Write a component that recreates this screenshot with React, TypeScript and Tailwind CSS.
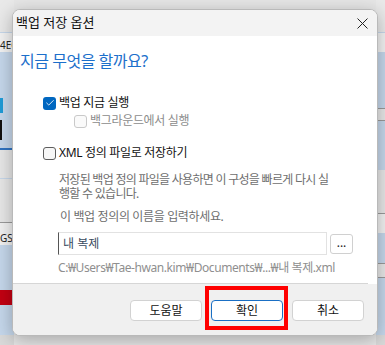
import { Check } from 'lucide-react'

const FONT = "font-['Noto_Sans','Noto_Sans_CJK_KR',sans-serif]"

type BoxProps = { checked?: boolean; disabled?: boolean }

const CheckBox = ({ checked, disabled }: BoxProps) => {
  if (checked) {
    return (
      <span className="w-[13px] h-[13px] rounded-[3px] bg-[#0067c0] flex items-center justify-center shrink-0">
        <Check size={10} strokeWidth={2} color="#ffffff" />
      </span>
    )
  }
  return (
    <span
      className={
        disabled
          ? 'w-[13px] h-[13px] rounded-[3px] border border-[#c9c9c9] bg-[#fafafa] shrink-0'
          : 'w-[13px] h-[13px] rounded-[3px] border border-[#5d5d5d] bg-[#f7f7f7] shrink-0'
      }
    />
  )
}

const DialogButton = ({ label, primary }: { label: string; primary?: boolean }) => (
  <button
    className={
      primary
        ? 'w-[72px] h-[21px] rounded-[4px] border border-[#1a6fc4] bg-white text-[12px] leading-none text-[#111] flex items-center justify-center'
        : 'w-[72px] h-[21px] rounded-[4px] border border-[#d2d2d2] bg-white text-[12px] leading-none text-[#111] flex items-center justify-center'
    }
  >
    {label}
  </button>
)

const App = () => {
  return (
    <div className={`relative w-[385px] h-[345px] overflow-hidden bg-[#e4e4e4] ${FONT}`}>
      {/* window behind the dialog */}
      <div className="flex h-full">
        <div className="w-[14px] flex flex-col">
          <div className="h-[32px] bg-[#e9e9e9]" />
          <div className="h-px bg-[#c6d7ea]" />
          <div className="h-[19px] bg-[#f2f2f2] text-[10px] leading-[19px] text-[#222] pt-[3px]">4EC</div>
          <div className="h-[96px] bg-[#c5d7eb] flex flex-col">
            <div className="h-[46px]" />
            <div className="h-[15px] w-[3px] bg-[#1f9bd7]" />
            <div className="h-[7px]" />
            <div className="h-[20px] w-[2px] bg-[#111]" />
          </div>
          <div className="h-[2px] bg-[#2f73c1]" />
          <div className="h-[28px] bg-[#e7e7e7]" />
          <div className="h-px bg-[#c6d7ea]" />
          <div className="h-[43px] bg-[#e7e7e7]" />
          <div className="h-px bg-[#9a9a9a]" />
          <div className="h-[22px] bg-[#f1f1f1] text-[10px] leading-[30px] text-[#222]">GST</div>
          <div className="h-[45px] bg-[#c5d7eb]" />
          <div className="h-[15px] bg-[#c30012]" />
          <div className="h-[30px] bg-[#c5d7eb]" />
          <div className="flex-1 bg-[#d9d9d9]" />
        </div>
        <div className="flex-1 bg-[#e6e6e6]" />
        <div className="w-[9px] flex flex-col">
          <div className="h-[32px] bg-[#e9e9e9]" />
          <div className="h-px bg-[#c6d7ea]" />
          <div className="h-[19px] bg-[#f2f2f2]" />
          <div className="h-[56px] bg-[#c5d7eb]" />
          <div className="h-px bg-[#9a9a9a]" />
          <div className="h-[11px] bg-[#e7e7e7]" />
          <div className="h-px bg-[#9a9a9a]" />
          <div className="h-[48px] bg-[#c5d7eb]" />
          <div className="h-px bg-[#c6d7ea]" />
          <div className="h-[43px] bg-[#e7e7e7]" />
          <div className="h-px bg-[#9a9a9a]" />
          <div className="h-[19px] bg-[#f1f1f1]" />
          <div className="h-[30px] bg-[#c5d7eb]" />
          <div className="h-px bg-[#9a9a9a]" />
          <div className="h-[13px] bg-[#e7e7e7]" />
          <div className="h-px bg-[#9a9a9a]" />
          <div className="h-[57px] bg-[#c5d7eb]" />
          <div className="flex-1 bg-[#d9d9d9]" />
        </div>
      </div>

      {/* dialog window */}
      <div className="absolute left-[12px] top-[9px] w-[366px] h-[327px] rounded-[8px] border border-[#b9b9b9] overflow-hidden bg-white shadow-[0_4px_18px_rgba(0,0,0,0.28)] flex flex-col">
        <div className="h-[26px] shrink-0 bg-[#f3f3f3] flex items-center justify-between pl-[3px] pr-[9px]">
          <span className="text-[13px] text-[#111]">백업 저장 옵션</span>
          <svg width="11" height="11" viewBox="0 0 11 11">
            <path d="M0.5 0.5 L10.5 10.5 M10.5 0.5 L0.5 10.5" stroke="#222" strokeWidth="1" />
          </svg>
        </div>

        <div className="flex-1 flex flex-col pl-[7px]">
          <h1 className="mt-[15px] h-[20px] text-[16px] leading-[20px] text-[#1c6fcb] font-normal tracking-[-0.03em]">
            지금 무엇을 할까요?
          </h1>

          <div className="mt-[24px] ml-[23px] h-[16px] flex items-center gap-[3px] tracking-[-0.02em]">
            <CheckBox checked />
            <span className="text-[12px] text-[#111]">백업 지금 실행</span>
          </div>

          <div className="mt-[2px] ml-[54px] h-[16px] flex items-center gap-[3px] tracking-[-0.02em]">
            <CheckBox disabled />
            <span className="text-[12px] text-[#8c8c8c]">백그라운드에서 실행</span>
          </div>

          <div className="mt-[16px] ml-[23px] h-[16px] flex items-center gap-[3px] tracking-[-0.02em]">
            <CheckBox />
            <span className="text-[12px] text-[#111]">XML 정의 파일로 저장하기</span>
          </div>

          <div className="mt-[12px] ml-[39px] flex flex-col text-[12px] text-[#6e6e6e] tracking-[-0.06em]">
            <div className="h-[14px] leading-[14px]">저장된 백업 정의 파일을 사용하면 이 구성을 빠르게 다시 실</div>
            <div className="h-[14px] leading-[14px]">행할 수 있습니다.</div>
          </div>

          <p className="mt-[9px] ml-[40px] text-[12px] leading-[14px] text-[#6e6e6e] tracking-[-0.03em]">
            이 백업 정의의 이름을 입력하세요.
          </p>

          <div className="mt-[8px] ml-[38px] flex items-center gap-[3px]">
            <div className="w-[269px] h-[23px] border border-[#e2e2e2] border-l-[#555] bg-white flex items-center pl-[4px]">
              <span className="text-[12px] text-[#3a4b60]">내 복제</span>
            </div>
            <button className="w-[23px] h-[20px] rounded-[3px] border border-[#d0d0d0] bg-white text-[12px] leading-none text-[#222] flex items-center justify-center pb-[2px]">
              ...
            </button>
          </div>

          <p className="mt-[6px] ml-[38px] text-[12px] leading-[13px] text-[#8f8f8f] tracking-[-0.035em]">
            C:₩Users₩Tae-hwan.kim₩Documents₩...₩내 복제.xml
          </p>
        </div>

        <div className="h-px shrink-0 bg-[#d6d6d6] mr-[9px]" />
        <div className="h-[51px] shrink-0 bg-[#f0f0f0] flex justify-end gap-[9px] pt-[16px] pr-[13px]">
          <DialogButton label="도움말" />
          <div className="relative">
            <DialogButton label="확인" primary />
            <div className="absolute left-[-6px] top-[-14px] w-[83px] h-[44px] border-[4px] border-[#ff0000]" />
          </div>
          <DialogButton label="취소" />
        </div>
      </div>
    </div>
  )
}

export default App
